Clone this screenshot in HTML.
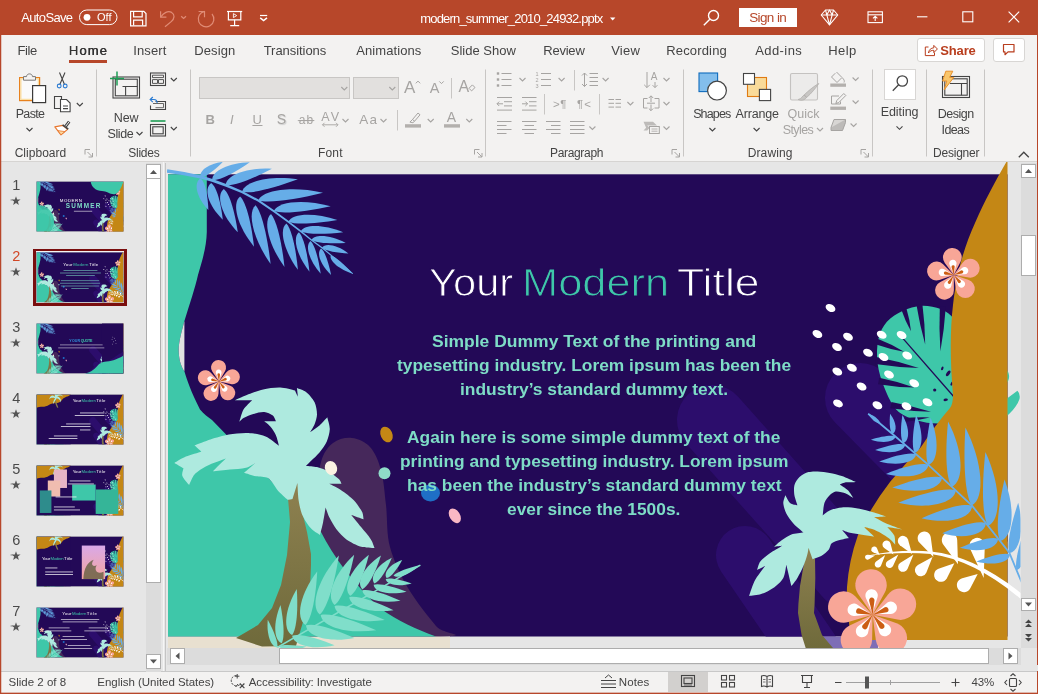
<!DOCTYPE html>
<html lang="en"><head><meta charset="utf-8"><title>modern_summer_2010_24932.pptx - PowerPoint</title>
<style>
html,body{margin:0;padding:0}
body{width:1038px;height:694px;position:relative;overflow:hidden;background:#E6E6E6;font-family:"Liberation Sans",sans-serif}
.t{position:absolute;white-space:nowrap;display:block}
.bm{display:inline-block;width:0;height:0}
svg{position:absolute;left:0;top:0}
</style></head><body>
<div style="position:absolute;left:0px;top:0px;width:1038px;height:35px;background:#B7472A;"></div>
<div style="position:absolute;left:0px;top:35px;width:1038px;height:126px;background:#F3F2F1;"></div>
<div style="position:absolute;left:0px;top:161px;width:1038px;height:1px;background:#D6D4D2;"></div>
<div style="position:absolute;left:163px;top:162px;width:1px;height:509px;background:#F5F5F5;"></div>
<div style="position:absolute;left:165px;top:163px;width:1px;height:508px;background:#C4C4C4;"></div>
<div style="position:absolute;left:0px;top:671px;width:1038px;height:1px;background:#C8C8C8;"></div>
<div style="position:absolute;left:0px;top:672px;width:1038px;height:22px;background:#F3F2F1;"></div>
<div style="position:absolute;left:0px;top:35px;width:1px;height:659px;background:#B7472A;"></div>
<div style="position:absolute;left:1036.5px;top:35px;width:1.5px;height:659px;background:#B7472A;"></div>
<div style="position:absolute;left:0px;top:693px;width:1038px;height:1px;background:#B7472A;"></div>
<div style="position:absolute;left:1px;top:35px;width:1px;height:659px;background:rgba(183,71,42,.25);"></div>
<div style="position:absolute;left:0px;top:692px;width:1038px;height:1px;background:rgba(183,71,42,.35);"></div>
<div style="position:absolute;left:739px;top:8px;width:58px;height:19px;background:#fff;"></div>
<div style="position:absolute;left:69px;top:60px;width:38px;height:3px;background:#B7472A;"></div>
<div style="position:absolute;left:917px;top:38px;width:66px;height:22px;background:#fff;border:1px solid #D8D6D4;border-radius:3px"></div>
<div style="position:absolute;left:993px;top:38px;width:30px;height:22px;background:#fff;border:1px solid #D8D6D4;border-radius:3px"></div>
<div style="position:absolute;left:199px;top:77px;width:151px;height:22px;box-sizing:border-box;background:#E2E0DE;border:1px solid #C8C6C4"></div>
<div style="position:absolute;left:353px;top:77px;width:46px;height:22px;box-sizing:border-box;background:#E2E0DE;border:1px solid #C8C6C4"></div>
<div style="position:absolute;left:884px;top:69px;width:32px;height:31px;box-sizing:border-box;background:#fff;border:1px solid #D8D6D4"></div>
<div style="position:absolute;left:146px;top:163px;width:15px;height:509px;background:#DCDCDC;"></div>
<div style="position:absolute;left:146px;top:164px;width:15px;height:15px;box-sizing:border-box;background:#fff;border:1px solid #ADADAD"></div>
<div style="position:absolute;left:146px;top:178px;width:15px;height:405px;box-sizing:border-box;background:#fff;border:1px solid #ADADAD"></div>
<div style="position:absolute;left:146px;top:654px;width:15px;height:15px;box-sizing:border-box;background:#fff;border:1px solid #ADADAD"></div>
<div style="position:absolute;left:33px;top:248.5px;width:94px;height:57.5px;background:#7A0E0E;"></div>
<div style="position:absolute;left:35.8px;top:251.3px;width:88.4px;height:51.9px;background:#fff;"></div>
<div style="position:absolute;left:1021px;top:163px;width:16px;height:485px;background:#DCDCDC;"></div>
<div style="position:absolute;left:1021px;top:164px;width:15px;height:14px;box-sizing:border-box;background:#fff;border:1px solid #ADADAD"></div>
<div style="position:absolute;left:1021px;top:235px;width:15px;height:41px;box-sizing:border-box;background:#fff;border:1px solid #ADADAD"></div>
<div style="position:absolute;left:1021px;top:598px;width:15px;height:13px;box-sizing:border-box;background:#fff;border:1px solid #ADADAD"></div>
<div style="position:absolute;left:167px;top:648px;width:854px;height:17px;background:#DCDCDC;"></div>
<div style="position:absolute;left:170px;top:648px;width:15px;height:16px;box-sizing:border-box;background:#fff;border:1px solid #ADADAD"></div>
<div style="position:absolute;left:279px;top:648px;width:710px;height:16px;box-sizing:border-box;background:#fff;border:1px solid #ADADAD"></div>
<div style="position:absolute;left:1003px;top:648px;width:15px;height:16px;box-sizing:border-box;background:#fff;border:1px solid #ADADAD"></div>
<div style="position:absolute;left:167px;top:665px;width:871px;height:6px;background:#E6E6E6;"></div>
<div style="position:absolute;left:668px;top:672px;width:40px;height:20px;background:#D2D0CE;"></div>
<svg width="1038" height="694" viewBox="0 0 1038 694">
<defs><clipPath id="ws"><rect x="167" y="162" width="853.5" height="486"/></clipPath>
<linearGradient id="trunk" x1="0" y1="0" x2="0" y2="1"><stop offset="0" stop-color="#8E8150"/><stop offset="1" stop-color="#6F6A3B"/></linearGradient>
</defs>
<g clip-path="url(#ws)"><g id="art">
<rect x="168" y="174.300" width="839.500" height="462.200" fill="#230957"/>
<clipPath id="sc"><rect x="168" y="174.300" width="839.500" height="462.200"/></clipPath><g clip-path="url(#sc)">
<path d="M712 420L850 575" stroke="#2C0D6C" stroke-width="70" stroke-linecap="round" fill="none"/>
<path d="M745 555L810 650" stroke="#2C0D6C" stroke-width="58" stroke-linecap="round" fill="none"/>
<path d="M860 398L980 520" stroke="#2C0D6C" stroke-width="70" stroke-linecap="round" fill="none"/>
</g>
<rect x="815" y="636.500" width="63" height="12" fill="#7E6EB6"/>
<path d="M333.0 443.0C338.2 439.0 345.8 437.3 352.0 438.0C358.2 438.7 365.2 441.7 370.0 447.0C374.8 452.3 378.3 460.3 381.0 470.0C383.7 479.7 384.5 492.2 386.0 505.0C387.5 517.8 386.3 533.2 390.0 547.0C393.7 560.8 400.3 574.8 408.0 588.0C415.7 601.2 429.5 617.9 436.0 626.0C442.5 634.1 469.7 634.8 447.0 636.5C424.3 638.2 322.5 649.2 300.0 636.5C277.5 623.8 309.3 582.8 312.0 560.0C314.7 537.2 314.5 516.3 316.0 500.0C317.5 483.7 318.2 471.5 321.0 462.0C323.8 452.5 327.8 447.0 333.0 443.0Z" fill="#46285B" />
<rect x="168" y="636.500" width="282" height="12" fill="#E8E0D0"/>
<path d="M168 174.300H206.800V232C206.500 246 203 258 198 275C195 288 190 303 184.400 321C181 334 178.600 343 178.700 350.500C178.800 358 180.500 366 184.400 371.300C187 380 191 392 200 409.400C204 414 208 417 212 420L321 532C333 556 352 582 381 609C398 621 416 629 436 636.500H168Z" fill="#3EC7A9"/>
<path d="M184.400 321C181 334 178.600 343 178.700 350.500C178.800 358 180.500 366 184.400 371.300Z" fill="#E1E1E1"/>
<path d="M921.2 305.9C927.6 305.6 935.3 306.9 940.8 309.1C946.4 311.4 950.6 314.4 954.3 319.4C958.0 324.4 960.6 330.4 962.9 339.0C965.1 347.6 967.4 360.6 967.8 370.8C968.2 381.1 967.0 392.5 965.3 400.2C963.7 408.0 962.1 413.5 958.0 417.4C953.9 421.3 947.8 423.0 940.8 423.5C933.9 424.0 923.7 422.6 916.3 420.3C909.0 418.1 902.1 415.4 896.7 410.0C891.4 404.6 887.7 395.7 884.5 388.0C881.3 380.2 878.7 371.7 877.6 363.5C876.6 355.3 876.8 345.9 878.4 339.0C879.9 332.1 882.9 326.5 886.9 321.8C891.0 317.2 897.2 313.5 902.9 310.8C908.6 308.2 914.9 306.2 921.2 305.9Z" fill="#3EC7A9" />
<path d="M1005 369.500C1010.500 371 1010.500 382 1005 384ZM1005 400L1017.400 390.700Q1020.500 393.500 1019.500 399Q1016 409 1005 417.500Z" fill="#3EC7A9"/>
<path d="M899.2 334.1L958.0 401.5" stroke="#230957" stroke-width="1.300"/>
<path d="M901.5 309.9Q905.3 321.1 911.0 331.2Q909.8 319.7 906.4 308.3Z" fill="#230957"/>
<path d="M916.5 305.1Q919.7 325.2 925.2 344.4Q925.0 324.4 922.4 304.3Z" fill="#230957"/>
<path d="M939.8 306.5Q938.9 329.0 940.4 351.2Q944.3 329.3 945.8 306.8Z" fill="#230957"/>
<path d="M876.2 344.4Q890.0 349.2 904.1 351.7Q891.8 344.4 878.2 339.1Z" fill="#230957"/>
<path d="M875.1 364.1Q896.9 367.5 918.8 367.9Q898.0 361.0 876.3 356.9Z" fill="#230957"/>
<path d="M878.0 384.2Q896.2 387.2 914.4 387.5Q897.3 381.4 879.2 377.8Z" fill="#230957"/>
<path d="M890.3 408.3Q910.7 411.3 931.0 411.8Q911.7 405.6 891.4 401.9Z" fill="#230957"/>
<path d="M901.4 422.4Q915.9 420.7 929.8 417.4Q915.5 417.0 900.9 418.3Z" fill="#230957"/>
<ellipse cx="942.3" cy="368.4" rx="1.1" ry="2.0" transform="rotate(20 942.3 368.4)" fill="#230957"/>
<ellipse cx="948.2" cy="373.3" rx="1.6" ry="3.2" transform="rotate(35 948.2 373.3)" fill="#230957"/>
<ellipse cx="951.9" cy="383.6" rx="1.1" ry="2.2" transform="rotate(30 951.9 383.6)" fill="#230957"/>
<ellipse cx="934.7" cy="390.0" rx="1.6" ry="1.6" transform="rotate(0 934.7 390.0)" fill="#230957"/>
<ellipse cx="945.7" cy="399.8" rx="2.2" ry="1.3" transform="rotate(-10 945.7 399.8)" fill="#230957"/>
<path d="M1007.500 160L1007.500 640H852Q846 612 847 587Q849 560 858 535Q870 508 890 482Q905 464 921 447Q936 424 950 408Q953 404 953 395C950 360 950 330 953 305C957 270 965 245 975 223C985 200 996 180 1007.500 160Z" fill="#C48715"/>
<ellipse cx="830.5" cy="308.0" rx="5.2" ry="3.6" transform="rotate(28 830.5 308.0)" fill="#fff"/>
<ellipse cx="817.4" cy="334.0" rx="5.2" ry="3.6" transform="rotate(28 817.4 334.0)" fill="#fff"/>
<ellipse cx="848.0" cy="336.7" rx="5.2" ry="3.6" transform="rotate(28 848.0 336.7)" fill="#fff"/>
<ellipse cx="837.0" cy="347.0" rx="5.2" ry="3.6" transform="rotate(28 837.0 347.0)" fill="#fff"/>
<ellipse cx="868.0" cy="352.8" rx="5.2" ry="3.6" transform="rotate(28 868.0 352.8)" fill="#fff"/>
<ellipse cx="881.7" cy="334.8" rx="5.2" ry="3.6" transform="rotate(28 881.7 334.8)" fill="#fff"/>
<ellipse cx="901.6" cy="335.0" rx="5.2" ry="3.6" transform="rotate(28 901.6 335.0)" fill="#fff"/>
<ellipse cx="883.5" cy="357.0" rx="5.2" ry="3.6" transform="rotate(28 883.5 357.0)" fill="#fff"/>
<ellipse cx="907.2" cy="355.5" rx="5.2" ry="3.6" transform="rotate(28 907.2 355.5)" fill="#fff"/>
<ellipse cx="837.3" cy="371.5" rx="5.2" ry="3.6" transform="rotate(28 837.3 371.5)" fill="#fff"/>
<ellipse cx="851.9" cy="367.8" rx="5.2" ry="3.6" transform="rotate(28 851.9 367.8)" fill="#fff"/>
<ellipse cx="889.0" cy="374.5" rx="5.2" ry="3.6" transform="rotate(28 889.0 374.5)" fill="#fff"/>
<ellipse cx="861.6" cy="386.5" rx="5.2" ry="3.6" transform="rotate(28 861.6 386.5)" fill="#fff"/>
<ellipse cx="914.2" cy="383.2" rx="5.2" ry="3.6" transform="rotate(28 914.2 383.2)" fill="#fff"/>
<ellipse cx="838.0" cy="403.4" rx="5.2" ry="3.6" transform="rotate(28 838.0 403.4)" fill="#fff"/>
<ellipse cx="877.4" cy="405.2" rx="5.2" ry="3.6" transform="rotate(28 877.4 405.2)" fill="#fff"/>
<ellipse cx="906.5" cy="406.2" rx="5.2" ry="3.6" transform="rotate(28 906.5 406.2)" fill="#fff"/>
<ellipse cx="927.5" cy="402.3" rx="5.2" ry="3.6" transform="rotate(28 927.5 402.3)" fill="#fff"/>
<polygon points="166.7,172.7 183.7,175.2 200.2,178.5 211.8,181.7 225.2,186.4 241.5,193.1 257.8,201.6 273.3,212.0 287.8,222.5 300.3,232.0 311.0,240.6 321.6,248.3 336.7,260.4 352.6,274.0 353.2,273.4 337.3,259.6 322.4,247.3 311.8,239.4 301.3,230.8 288.8,221.1 274.5,210.4 259.0,199.8 242.5,190.9 226.2,184.0 212.6,179.1 201.0,175.5 184.3,172.0 167.3,169.3" fill="#66ADE8" />
<path d="M200.6 177.3C198.6 170.6 209.0 163.4 222.8 161.9C215.1 169.8 205.6 177.4 200.6 177.3Z" fill="#66ADE8"/>
<path d="M212.2 180.2C211.5 171.1 229.2 162.7 249.8 162.3C235.9 171.9 219.5 181.0 212.2 180.2Z" fill="#66ADE8"/>
<path d="M225.7 185.0C226.2 174.8 248.0 167.1 271.9 168.7C254.4 178.0 234.0 186.6 225.7 185.0Z" fill="#66ADE8"/>
<path d="M242.1 191.8C244.4 181.1 270.6 175.2 297.9 179.3C276.3 187.4 251.4 194.2 242.1 191.8Z" fill="#66ADE8"/>
<path d="M258.4 200.5C262.4 189.7 292.7 186.0 323.0 192.8C297.6 199.1 268.7 203.8 258.4 200.5Z" fill="#66ADE8"/>
<path d="M273.9 211.1C277.6 201.2 304.3 198.9 330.7 206.2C308.2 211.2 282.7 214.5 273.9 211.1Z" fill="#66ADE8"/>
<path d="M288.3 221.7C292.0 213.0 315.1 212.3 337.4 220.1C317.9 223.4 295.8 225.2 288.3 221.7Z" fill="#66ADE8"/>
<path d="M300.8 231.3C304.4 223.8 324.3 224.2 343.2 232.3C326.2 234.3 307.1 234.8 300.8 231.3Z" fill="#66ADE8"/>
<path d="M311.4 240.0C314.7 233.6 330.9 234.9 345.7 242.9C331.8 243.8 316.3 243.3 311.4 240.0Z" fill="#66ADE8"/>
<path d="M322.0 247.7C325.4 242.6 337.8 245.3 348.4 253.4C337.5 252.9 325.5 251.0 322.0 247.7Z" fill="#66ADE8"/>
<path d="M330.7 255.4C329.1 260.9 339.6 269.5 352.9 273.7C345.0 265.1 335.5 256.3 330.7 255.4Z" fill="#66ADE8"/>
<path d="M200.6 178.3C193.0 182.9 196.6 197.8 208.4 210.1C207.9 196.7 205.5 182.2 200.6 178.3Z" fill="#66ADE8"/>
<path d="M211.2 183.1C203.1 188.9 208.5 206.1 222.8 219.7C221.0 204.2 217.0 187.3 211.2 183.1Z" fill="#66ADE8"/>
<path d="M223.8 188.9C215.3 195.5 221.9 215.9 237.8 232.3C235.2 213.9 230.1 194.0 223.8 188.9Z" fill="#66ADE8"/>
<path d="M240.1 196.6C231.2 203.4 237.7 227.0 254.0 246.7C251.6 225.8 246.7 202.9 240.1 196.6Z" fill="#66ADE8"/>
<path d="M255.6 205.3C246.6 212.6 253.7 240.2 270.6 264.0C267.8 239.7 262.3 212.9 255.6 205.3Z" fill="#66ADE8"/>
<path d="M271.0 213.9C262.5 220.6 268.8 245.5 284.5 266.9C282.1 245.0 277.2 220.8 271.0 213.9Z" fill="#66ADE8"/>
<path d="M286.4 223.6C278.6 229.4 284.1 251.2 297.9 269.8C296.1 250.6 292.0 229.6 286.4 223.6Z" fill="#66ADE8"/>
<path d="M298.9 232.3C292.1 237.5 297.0 256.0 309.5 271.8C307.7 255.3 303.9 237.3 298.9 232.3Z" fill="#66ADE8"/>
<path d="M310.5 240.9C304.6 245.6 309.4 261.0 320.7 273.7C318.7 259.9 315.0 244.9 310.5 240.9Z" fill="#66ADE8"/>
<path d="M321.1 248.6C316.0 253.0 320.7 265.4 331.1 275.0C328.9 263.8 325.2 251.6 321.1 248.6Z" fill="#66ADE8"/>
<path d="M864.500 556Q900 551 931 554Q975 560 1022 600L1022 594Q975 556 931 551.500Q900 549 864.500 556Z" fill="#fff"/>
<path d="M879.7 554.9L873.1 552.3A3.0 3.0 0 1 1 877.0 548.3Z" fill="#fff"/>
<path d="M893.4 554.4L884.2 547.9A4.1 4.1 0 1 1 890.5 543.5Z" fill="#fff"/>
<path d="M912.0 554.1L899.9 545.2A5.2 5.2 0 1 1 908.0 539.6Z" fill="#fff"/>
<path d="M933.4 556.9L919.6 542.8A6.6 6.6 0 1 1 930.8 537.4Z" fill="#fff"/>
<path d="M958.0 564.2L943.4 544.8A7.7 7.7 0 1 1 957.2 539.9Z" fill="#fff"/>
<path d="M983.7 577.9L970.2 548.9A7.7 7.7 0 1 1 984.8 545.9Z" fill="#fff"/>
<path d="M875.1 555.5L869.0 559.2A2.5 2.5 0 1 1 867.9 554.7Z" fill="#fff"/>
<path d="M885.2 554.9L881.1 565.4A3.3 3.3 0 1 1 876.1 561.6Z" fill="#fff"/>
<path d="M898.3 554.4L893.0 565.9A3.8 3.8 0 1 1 887.6 561.0Z" fill="#fff"/>
<path d="M913.4 554.7L907.5 568.9A4.9 4.9 0 1 1 900.4 562.8Z" fill="#fff"/>
<path d="M932.5 556.9L926.4 572.5A6.0 6.0 0 1 1 917.9 565.0Z" fill="#fff"/>
<path d="M954.4 563.2L946.9 578.3A6.8 6.8 0 1 1 938.5 568.7Z" fill="#fff"/>
<path d="M977.7 574.1L970.3 588.3A7.1 7.1 0 1 1 962.2 578.2Z" fill="#fff"/>
<path d="M868.2 413.7L892.8 434.2L928.4 464.9L972.2 505.9L1009.2 552.5L1021.5 582.0" stroke="#66ADE8" stroke-width="1.800" fill="none"/>
<path d="M892.3 433.8C897.5 431.6 896.5 422.1 890.1 413.7C889.3 421.9 889.6 431.0 892.3 433.8Z" fill="#66ADE8"/>
<path d="M903.3 443.2C910.0 440.7 909.7 427.5 902.4 415.1C900.6 426.4 900.1 439.1 903.3 443.2Z" fill="#66ADE8"/>
<path d="M914.7 453.1C923.2 450.3 923.8 432.5 916.1 415.1C913.0 430.2 911.3 447.2 914.7 453.1Z" fill="#66ADE8"/>
<path d="M928.4 464.9C938.3 461.6 939.4 439.4 930.6 417.8C926.7 436.5 924.5 457.6 928.4 464.9Z" fill="#66ADE8"/>
<path d="M951.7 486.7C964.8 480.7 963.1 450.0 948.1 421.4C945.4 447.7 945.3 477.2 951.7 486.7Z" fill="#66ADE8"/>
<path d="M971.7 505.4C985.6 498.0 982.6 461.3 965.4 427.4C963.4 459.0 964.4 494.2 971.7 505.4Z" fill="#66ADE8"/>
<path d="M988.1 525.9C1002.0 519.5 1000.7 484.8 985.4 452.0C982.0 481.7 981.5 515.1 988.1 525.9Z" fill="#66ADE8"/>
<path d="M1000.2 541.1C1013.5 537.1 1015.5 508.1 1004.5 479.4C998.7 503.8 995.1 531.4 1000.2 541.1Z" fill="#66ADE8"/>
<path d="M1009.5 553.1C1020.5 550.9 1024.6 527.2 1018.2 502.7C1011.5 522.3 1006.2 544.8 1009.5 553.1Z" fill="#66ADE8"/>
<path d="M1016.6 570.2C1023.4 568.6 1026.0 552.9 1022.1 536.9C1017.8 549.9 1014.6 564.7 1016.6 570.2Z" fill="#66ADE8"/>
<path d="M895.6 436.6C894.3 442.2 882.7 443.7 870.9 439.7C880.6 436.8 891.6 434.7 895.6 436.6Z" fill="#66ADE8"/>
<path d="M905.2 444.8C903.9 452.0 889.8 454.5 875.1 450.1C886.7 445.9 900.1 442.6 905.2 444.8Z" fill="#66ADE8"/>
<path d="M916.1 454.3C914.8 463.0 897.4 466.4 879.2 461.6C893.4 456.1 909.9 451.8 916.1 454.3Z" fill="#66ADE8"/>
<path d="M928.4 464.9C927.1 475.1 907.1 479.4 886.0 473.9C902.3 467.3 921.2 462.0 928.4 464.9Z" fill="#66ADE8"/>
<path d="M942.1 477.7C940.4 489.8 917.0 494.5 892.3 487.6C911.5 480.1 933.7 474.2 942.1 477.7Z" fill="#66ADE8"/>
<path d="M955.8 490.5C953.8 503.9 926.8 509.6 898.3 502.7C920.5 493.9 946.0 486.9 955.8 490.5Z" fill="#66ADE8"/>
<path d="M972.2 505.9C971.1 518.9 947.3 524.6 921.6 518.3C940.9 509.6 963.4 502.5 972.2 505.9Z" fill="#66ADE8"/>
<path d="M985.9 523.2C984.9 534.9 964.4 539.7 942.1 533.3C958.8 525.8 978.2 519.9 985.9 523.2Z" fill="#66ADE8"/>
<path d="M998.2 538.7C997.4 548.9 979.4 553.2 959.9 547.8C974.5 541.2 991.5 535.9 998.2 538.7Z" fill="#66ADE8"/>
<path d="M1010.0 554.4C1009.0 562.8 993.1 566.1 976.3 561.5C989.3 556.2 1004.2 552.1 1010.0 554.4Z" fill="#66ADE8"/>
<path d="M881.0 424.0Q877.7 416.2 868.0 413.5Q872.6 422.4 881.0 424.0Z" fill="#66ADE8"/>
<polygon points="288.0,498.0 298.0,482.0 301.0,507.0 307.0,532.0 311.0,554.0 311.0,565.0 310.0,590.0 306.0,612.0 300.0,632.0 296.0,646.0 262.0,646.5 236.0,638.0 258.0,625.0 272.0,608.0 281.0,585.0 287.0,555.0 290.0,522.0" fill="url(#trunk)" />
<path d="M234.9 400.2C237.0 399.3 244.6 395.8 248.4 394.3C252.5 392.8 258.9 390.3 263.1 389.4C267.8 388.4 275.4 387.3 280.3 387.5C284.5 387.6 292.8 389.9 295.0 390.4C295.4 391.3 297.5 395.8 297.9 396.8C297.8 395.4 297.1 389.3 296.9 387.9C298.3 388.5 303.8 390.1 306.0 391.9C308.9 394.2 312.9 398.8 314.6 402.2C316.1 405.3 317.0 410.9 317.0 414.4C317.0 417.2 315.6 421.6 314.6 424.2C313.7 426.6 310.8 430.9 310.2 432.0C311.6 431.1 317.0 427.5 319.5 425.4C321.9 423.4 326.1 418.6 327.3 417.3C327.7 419.1 329.8 425.7 329.8 429.1C329.7 432.6 328.3 438.1 326.8 441.4C325.3 444.8 321.8 449.5 319.5 452.4C317.3 455.0 313.3 458.6 310.9 461.0C309.5 462.3 306.7 465.1 306.0 465.9C307.7 466.0 314.0 466.3 317.0 467.1C320.6 468.0 326.0 470.2 329.3 472.0C332.3 473.7 336.6 477.0 339.1 479.3C340.1 480.3 341.2 483.1 341.5 483.8C339.7 483.8 331.1 483.8 329.3 483.8C331.1 484.7 338.3 488.2 341.5 490.4C345.2 492.8 350.8 497.0 353.8 500.2C356.7 503.2 360.4 508.7 362.4 512.4C363.2 514.2 363.4 518.3 363.6 519.3C361.7 518.6 353.2 515.5 351.3 514.9C352.8 516.7 358.4 523.7 361.1 527.1C363.9 530.6 368.5 535.7 370.9 539.4C372.4 541.6 374.1 546.7 374.6 548.0C372.6 547.8 364.8 547.8 361.1 546.7C356.7 545.4 350.2 542.0 346.4 539.4C343.2 537.1 339.0 532.6 336.6 529.6C334.2 526.4 331.1 520.9 329.3 517.3C328.0 514.7 326.2 509.0 325.6 507.5C325.2 509.7 324.0 518.1 323.1 522.2C322.4 525.8 320.4 533.1 320.0 535.0C318.6 534.0 313.0 530.7 310.9 528.3C307.9 525.0 304.1 519.0 302.3 514.9C300.6 511.0 299.3 504.4 298.6 500.2C297.9 495.4 297.6 485.6 297.4 483.0C296.7 485.4 293.3 496.6 292.5 498.9C291.8 499.1 288.4 499.6 287.6 499.7C286.1 498.3 280.4 493.2 277.8 490.4C274.9 487.1 271.7 480.5 268.0 478.1C265.1 476.2 259.2 476.9 255.8 476.2C252.4 475.4 245.8 473.2 244.0 472.7C245.7 471.3 253.6 464.4 255.3 462.9C253.9 463.7 248.8 467.1 246.0 467.8C241.6 469.0 234.5 469.1 230.0 469.5C225.2 470.0 215.5 471.0 212.9 471.3C214.8 469.3 223.9 460.4 225.9 458.5C223.0 459.6 211.9 463.3 206.8 465.9C203.0 467.8 197.3 471.4 194.5 474.4C192.3 476.9 189.9 483.4 189.1 485.0C188.1 483.6 183.3 478.7 182.3 475.7C181.6 473.7 183.3 469.4 183.5 468.3C182.1 467.5 175.8 463.7 174.4 462.9C176.1 462.0 182.5 458.0 185.9 456.6C190.1 454.8 199.0 452.4 201.4 451.7C200.3 450.7 195.5 446.2 194.5 445.3C196.9 444.4 205.9 440.8 210.4 439.4C215.5 437.8 223.6 435.4 228.8 434.5C234.2 433.6 242.9 432.7 248.4 433.0C253.3 433.3 261.0 434.6 265.6 436.5C269.8 438.2 277.0 444.4 279.0 445.8C278.6 444.2 277.1 438.0 275.9 435.2C274.7 432.6 272.3 428.8 270.5 426.7C269.0 424.9 265.3 422.1 264.3 421.3C266.1 421.3 274.1 421.3 275.9 421.3C275.4 420.4 274.3 416.7 272.9 415.6C270.9 414.0 266.9 412.2 264.3 412.0C261.2 411.7 256.3 413.0 253.3 413.9C250.5 414.8 246.1 416.6 243.5 418.1C242.2 418.8 240.0 421.2 239.3 421.8C240.0 419.9 241.7 412.6 243.5 409.5C245.3 406.5 250.8 401.6 252.1 400.2C249.5 400.2 237.5 400.2 234.9 400.2Z" fill="#AEEADF" />
<polygon points="807.5,545.0 815.0,559.0 815.3,578.0 814.6,604.0 814.0,613.0 822.0,635.0 833.0,648.0 805.7,648.0 801.6,635.0 798.0,613.0 798.4,604.0 800.0,586.0 803.5,566.0" fill="url(#trunk)" />
<path d="M808.5 472.1C811.0 471.3 815.1 471.3 817.6 471.5C821.0 471.6 826.4 472.4 829.7 473.1C833.1 473.7 838.5 475.0 841.8 476.1C845.9 477.5 853.8 481.2 855.9 482.1C854.4 482.2 848.6 482.0 845.8 482.3C844.1 482.6 840.7 484.1 839.8 484.4C841.0 485.2 845.9 488.2 847.9 490.2C849.8 492.2 852.7 497.1 853.5 498.3C852.4 497.6 848.2 494.5 845.8 493.6C843.2 492.6 838.6 491.3 835.8 491.6C833.8 491.8 831.1 493.9 829.7 495.3C828.0 496.9 825.5 500.0 824.7 502.3C823.4 505.8 823.0 513.5 822.7 515.4C823.7 514.7 827.5 511.3 829.7 510.4C832.9 509.0 838.3 507.6 841.8 507.4C846.3 507.0 853.5 507.7 857.9 508.4C862.5 509.1 869.6 511.1 874.1 512.4C877.5 513.4 884.4 515.8 886.2 516.4C884.4 516.5 875.9 516.9 874.1 517.0C875.9 518.0 882.7 521.9 886.2 523.5C890.6 525.4 899.9 528.6 902.3 529.5C900.1 529.2 889.5 527.5 887.2 527.1C888.3 528.4 893.0 532.8 894.3 535.6C895.3 537.9 895.1 543.3 895.3 544.7C894.4 543.8 891.1 540.1 889.2 538.6C887.1 536.9 883.5 534.5 881.1 533.2C878.7 531.8 874.7 530.1 872.1 529.1C869.9 528.4 865.2 527.4 864.0 527.1C865.5 528.5 872.6 535.2 874.1 536.6C872.3 536.3 865.4 535.3 862.0 534.8C858.6 534.2 853.2 533.6 849.9 532.8C847.7 532.2 843.4 530.4 842.2 529.9C843.2 531.2 847.9 536.8 848.9 538.0C847.5 538.3 842.3 539.3 839.8 540.0C837.5 540.7 833.6 541.7 831.7 543.3C830.2 544.6 830.0 548.2 828.7 549.7C827.1 551.7 823.9 554.4 821.6 555.8C819.3 557.1 813.9 558.7 812.6 559.2C812.0 557.5 809.1 549.4 808.5 547.7C808.4 548.6 808.0 552.1 807.5 553.7C806.6 557.2 804.9 562.6 803.5 565.8C802.0 569.3 799.4 574.7 797.4 577.9C796.0 580.4 792.3 584.8 791.4 586.0C790.6 582.8 787.1 568.0 786.3 564.8C785.9 566.8 785.2 574.7 783.3 577.9C781.4 581.4 776.5 585.7 773.2 588.0C770.2 590.3 764.7 592.9 761.1 594.1C757.9 595.2 750.8 595.8 749.0 596.1C749.9 593.7 752.8 584.2 755.1 580.0C757.4 575.7 763.7 568.0 765.2 565.8C764.0 566.5 758.3 569.3 757.1 569.9C757.6 568.7 758.7 563.7 760.1 561.8C762.2 559.1 766.5 555.7 769.2 553.7C772.7 551.2 780.3 546.9 782.3 545.7C781.1 545.8 775.5 546.5 774.2 546.7C775.3 545.8 779.2 542.1 781.3 540.6C784.0 538.7 788.3 535.7 791.4 534.6C794.6 533.4 801.7 532.9 803.5 532.6C802.0 531.2 795.9 526.3 793.4 523.5C791.1 520.9 787.9 516.5 786.3 513.4C785.0 510.8 783.5 506.3 783.3 503.3C783.2 501.0 785.0 496.5 785.3 495.3C786.1 496.5 788.3 501.6 790.4 503.3C792.0 504.6 796.4 505.0 797.4 505.3C797.0 503.8 794.9 498.2 794.4 495.3C794.0 492.5 793.7 487.9 794.4 485.2C795.1 482.6 797.5 478.9 799.5 477.1C801.6 475.1 805.8 472.9 808.5 472.1Z" fill="#AEEADF" />
<path d="M277.3 647.5L420.4 565.1" stroke="#80DECA" stroke-width="1.500" fill="none"/>
<path d="M277.3 647.5C270.8 647.3 266.3 634.2 267.8 619.8C273.4 630.2 278.5 642.5 277.3 647.5Z" fill="#80DECA"/>
<path d="M281.7 643.2C273.6 640.4 273.0 622.4 280.5 605.0C283.5 620.2 285.0 637.3 281.7 643.2Z" fill="#80DECA"/>
<path d="M292.1 635.0C282.6 630.3 284.8 608.7 296.8 588.9C298.0 607.7 297.1 628.5 292.1 635.0Z" fill="#80DECA"/>
<path d="M305.4 625.0C294.9 618.2 300.4 593.1 317.2 571.6C316.1 593.7 312.3 618.1 305.4 625.0Z" fill="#80DECA"/>
<path d="M319.8 614.6C309.4 606.0 318.4 578.3 338.9 555.6C335.0 580.4 328.0 607.4 319.8 614.6Z" fill="#80DECA"/>
<path d="M334.6 605.0C325.2 596.7 334.4 573.1 354.2 554.7C349.8 576.2 342.4 599.4 334.6 605.0Z" fill="#80DECA"/>
<path d="M350.2 595.8C342.0 588.1 350.8 568.8 368.9 554.7C364.5 572.6 357.3 591.6 350.2 595.8Z" fill="#80DECA"/>
<path d="M362.3 589.4C355.5 582.1 364.3 566.2 381.0 555.6C376.2 570.6 368.8 586.4 362.3 589.4Z" fill="#80DECA"/>
<path d="M374.4 583.4C369.2 576.8 377.4 564.8 391.8 557.7C386.9 569.4 380.0 581.5 374.4 583.4Z" fill="#80DECA"/>
<path d="M386.6 578.1C382.9 572.5 390.3 563.9 402.2 559.9C397.5 568.6 391.1 577.3 386.6 578.1Z" fill="#80DECA"/>
<path d="M393.5 575.5C397.5 579.3 410.1 574.4 420.4 565.1C409.1 567.8 396.8 571.9 393.5 575.5Z" fill="#80DECA"/>
<path d="M279.1 646.1C281.2 651.1 294.2 651.3 306.8 646.6C295.7 644.9 283.3 644.0 279.1 646.1Z" fill="#80DECA"/>
<path d="M292.1 635.7C293.4 645.7 313.4 650.2 334.6 645.3C318.2 638.5 299.4 633.0 292.1 635.7Z" fill="#80DECA"/>
<path d="M306.0 625.3C307.1 637.0 329.9 642.9 354.5 638.0C336.0 629.5 314.5 622.5 306.0 625.3Z" fill="#80DECA"/>
<path d="M320.7 614.9C322.1 627.1 348.2 634.3 376.2 630.2C354.9 620.6 330.3 612.3 320.7 614.9Z" fill="#80DECA"/>
<path d="M334.6 605.9C335.7 617.3 359.3 624.0 384.8 620.1C365.6 611.2 343.4 603.5 334.6 605.9Z" fill="#80DECA"/>
<path d="M349.3 597.2C350.2 607.4 370.9 613.5 393.5 610.2C376.7 602.1 357.1 595.1 349.3 597.2Z" fill="#80DECA"/>
<path d="M362.3 590.3C363.2 599.2 381.1 604.1 400.5 600.7C385.9 594.0 369.0 588.3 362.3 590.3Z" fill="#80DECA"/>
<path d="M373.6 584.7C374.7 592.4 390.2 595.6 406.5 591.7C393.8 586.7 379.2 582.7 373.6 584.7Z" fill="#80DECA"/>
<path d="M385.7 579.0C386.9 585.0 399.1 587.0 411.7 583.4C401.6 579.8 390.0 577.2 385.7 579.0Z" fill="#80DECA"/>
<path d="M219.0 381.6L212.3 371.6A7.5 7.5 0 1 1 225.0 371.2Z" fill="#F8A697"/>
<path d="M219.0 381.6L226.4 372.2A7.5 7.5 0 1 1 230.8 384.1Z" fill="#F8A697"/>
<path d="M219.0 381.6L230.3 385.8A7.5 7.5 0 1 1 220.3 393.6Z" fill="#F8A697"/>
<path d="M219.0 381.6L218.5 393.6A7.5 7.5 0 1 1 208.0 386.5Z" fill="#F8A697"/>
<path d="M219.0 381.6L207.4 384.9A7.5 7.5 0 1 1 210.9 372.7Z" fill="#F8A697"/>
<path d="M219.0 380.7L216.0 373.5A2.9 2.9 0 1 1 221.4 373.4Z" fill="#fff"/>
<path d="M219.8 381.3L225.7 376.2A2.9 2.9 0 1 1 227.6 381.4Z" fill="#fff"/>
<path d="M219.5 382.3L226.2 386.3A2.9 2.9 0 1 1 221.9 389.7Z" fill="#fff"/>
<path d="M218.5 382.3L216.7 389.9A2.9 2.9 0 1 1 212.2 386.8Z" fill="#fff"/>
<path d="M218.2 381.4L210.4 382.0A2.9 2.9 0 1 1 211.9 376.7Z" fill="#fff"/>
<path d="M219.0 381.6L217.5 375.0A1.3 1.3 0 1 1 220.0 374.9Z" fill="#CC5E14"/>
<path d="M219.0 381.6L224.8 378.1A1.3 1.3 0 1 1 225.7 380.5Z" fill="#CC5E14"/>
<path d="M219.0 381.6L224.1 386.1A1.3 1.3 0 1 1 222.1 387.6Z" fill="#CC5E14"/>
<path d="M219.0 381.6L216.3 387.8A1.3 1.3 0 1 1 214.2 386.4Z" fill="#CC5E14"/>
<path d="M219.0 381.6L212.2 381.0A1.3 1.3 0 1 1 212.9 378.5Z" fill="#CC5E14"/>
<path d="M953.8 275.1L944.8 262.9A9.4 9.4 0 1 1 960.7 261.6Z" fill="#F8A697"/>
<path d="M953.8 275.1L962.6 262.8A9.4 9.4 0 1 1 968.7 277.5Z" fill="#F8A697"/>
<path d="M953.8 275.1L968.2 279.7A9.4 9.4 0 1 1 956.1 290.1Z" fill="#F8A697"/>
<path d="M953.8 275.1L953.9 290.2A9.4 9.4 0 1 1 940.3 281.9Z" fill="#F8A697"/>
<path d="M953.8 275.1L939.4 279.9A9.4 9.4 0 1 1 943.1 264.3Z" fill="#F8A697"/>
<path d="M953.7 274.0L949.6 265.1A3.7 3.7 0 1 1 956.4 264.6Z" fill="#fff"/>
<path d="M954.8 274.7L962.0 268.0A3.7 3.7 0 1 1 964.6 274.3Z" fill="#fff"/>
<path d="M954.5 275.9L963.1 280.7A3.7 3.7 0 1 1 957.9 285.1Z" fill="#fff"/>
<path d="M953.2 276.0L951.4 285.7A3.7 3.7 0 1 1 945.5 282.1Z" fill="#fff"/>
<path d="M952.7 274.8L943.0 276.0A3.7 3.7 0 1 1 944.6 269.4Z" fill="#fff"/>
<path d="M953.8 275.1L951.5 266.9A1.6 1.6 0 1 1 954.7 266.6Z" fill="#CC5E14"/>
<path d="M953.8 275.1L960.9 270.4A1.6 1.6 0 1 1 962.2 273.4Z" fill="#CC5E14"/>
<path d="M953.8 275.1L960.5 280.4A1.6 1.6 0 1 1 958.0 282.5Z" fill="#CC5E14"/>
<path d="M953.8 275.1L950.8 283.1A1.6 1.6 0 1 1 948.0 281.4Z" fill="#CC5E14"/>
<path d="M953.8 275.1L945.3 274.7A1.6 1.6 0 1 1 946.0 271.6Z" fill="#CC5E14"/>
<path d="M872.6 614.8L858.1 593.9A15.7 15.7 0 1 1 884.8 592.5Z" fill="#F8A697"/>
<path d="M872.6 614.8L888.0 594.6A15.7 15.7 0 1 1 897.5 619.6Z" fill="#F8A697"/>
<path d="M872.6 614.8L896.6 623.2A15.7 15.7 0 1 1 875.8 640.0Z" fill="#F8A697"/>
<path d="M872.6 614.8L872.1 640.2A15.7 15.7 0 1 1 849.6 625.6Z" fill="#F8A697"/>
<path d="M872.6 614.8L848.3 622.1A15.7 15.7 0 1 1 855.2 596.3Z" fill="#F8A697"/>
<path d="M872.5 613.0L865.9 597.9A6.2 6.2 0 1 1 877.5 597.3Z" fill="#fff"/>
<path d="M874.3 614.1L886.6 603.2A6.2 6.2 0 1 1 890.7 614.0Z" fill="#fff"/>
<path d="M873.7 616.2L887.9 624.6A6.2 6.2 0 1 1 879.0 631.8Z" fill="#fff"/>
<path d="M871.6 616.3L868.1 632.4A6.2 6.2 0 1 1 858.4 626.1Z" fill="#fff"/>
<path d="M870.8 614.3L854.5 615.9A6.2 6.2 0 1 1 857.5 604.8Z" fill="#fff"/>
<path d="M872.6 614.8L869.2 600.9A2.7 2.7 0 1 1 874.5 600.6Z" fill="#CC5E14"/>
<path d="M872.6 614.8L884.8 607.2A2.7 2.7 0 1 1 886.7 612.3Z" fill="#CC5E14"/>
<path d="M872.6 614.8L883.5 624.1A2.7 2.7 0 1 1 879.4 627.4Z" fill="#CC5E14"/>
<path d="M872.6 614.8L867.2 628.1A2.7 2.7 0 1 1 862.7 625.1Z" fill="#CC5E14"/>
<path d="M872.6 614.8L858.3 613.8A2.7 2.7 0 1 1 859.7 608.6Z" fill="#CC5E14"/>
<ellipse cx="386.5" cy="434.5" rx="5.8" ry="8.2" transform="rotate(-25 386.5 434.5)" fill="#C48715"/>
<ellipse cx="384.5" cy="473.3" rx="6.0" ry="6.0" transform="rotate(0 384.5 473.3)" fill="#8FDCC8"/>
<ellipse cx="430.5" cy="493.0" rx="9.5" ry="8.5" transform="rotate(0 430.5 493.0)" fill="#1F6FC6"/>
<ellipse cx="454.8" cy="515.8" rx="5.2" ry="8.0" transform="rotate(-32 454.8 515.8)" fill="#F9B8C4"/>
<ellipse cx="331.0" cy="468.0" rx="6.0" ry="7.2" transform="rotate(-25 331.0 468.0)" fill="#FBF2E2"/>
</g></g>
<clipPath id="tc0"><rect x="36.5" y="181.5" width="87" height="50"/></clipPath><rect x="36.0" y="181.0" width="88" height="51" fill="#C9C9C9"/><g clip-path="url(#tc0)"><g transform="translate(19.090 162.645) scale(0.10363 0.10818)"><use href="#art"/><path d="M690 175C700 230 740 260 800 262C850 262 880 300 930 290C960 280 990 230 1007 175Z" fill="#3EC7A9"/><path d="M168 636V400C230 380 300 420 330 500C350 560 330 600 300 636Z" fill="#3EC7A9" opacity=".9"/><path d="M1007 175L1007 636H900C880 560 960 470 950 400C945 330 990 250 1007 175Z" fill="#C48715"/></g></g>
<clipPath id="tc1"><rect x="36.5" y="252.3" width="87" height="50"/></clipPath><rect x="36.0" y="251.8" width="88" height="51" fill="#C9C9C9"/><g clip-path="url(#tc1)"><g transform="translate(19.090 233.445) scale(0.10363 0.10818)"><use href="#art"/></g></g>
<clipPath id="tc2"><rect x="36.5" y="323.5" width="87" height="50"/></clipPath><rect x="36.0" y="323.0" width="88" height="51" fill="#C9C9C9"/><g clip-path="url(#tc2)"><g transform="translate(19.090 304.645) scale(0.10363 0.10818)"><use href="#art"/><rect x="800" y="170" width="208" height="470" fill="#230957"/><path d="M700 600C760 520 860 540 930 480C970 450 1000 440 1007 430V640H640Z" fill="#2C0D6C"/><path d="M1007 640H630C700 625 735 590 770 552C810 512 880 532 930 506C970 490 1000 480 1007 468Z" fill="#3EC7A9"/><circle cx="905" cy="300" r="3.500" fill="#fff"/><circle cx="923" cy="310" r="3.500" fill="#fff"/><circle cx="897" cy="322" r="3.500" fill="#fff"/><circle cx="931" cy="330" r="3.500" fill="#fff"/><circle cx="911" cy="344" r="3.500" fill="#fff"/><circle cx="935" cy="356" r="3.500" fill="#fff"/><circle cx="901" cy="364" r="3.500" fill="#fff"/></g></g>
<clipPath id="tc3"><rect x="36.5" y="394.5" width="87" height="50"/></clipPath><rect x="36.0" y="394.0" width="88" height="51" fill="#C9C9C9"/><g clip-path="url(#tc3)"><g transform="translate(19.090 375.645) scale(0.10363 0.10818)"><use href="#art"/><rect x="168" y="175" width="330" height="462" fill="#230957"/><path d="M168 175H500C470 200 440 190 410 230C380 270 330 240 290 270C250 300 200 280 168 300Z" fill="#C48715"/><g transform="translate(80 -75) scale(0.82)"><path d="M330 330C335 380 350 420 365 450L350 452C330 420 318 380 318 330Z" fill="#857A48"/><path d="M325 330C290 300 270 320 255 360C280 335 300 340 325 345C310 370 300 390 305 410C320 380 335 365 345 345C370 350 390 370 395 395C400 360 385 335 350 325C380 310 405 315 420 330C405 295 370 290 345 305C340 280 320 262 295 265C315 280 322 300 325 330Z" fill="#AEEADF"/></g></g></g>
<clipPath id="tc4"><rect x="36.5" y="465.5" width="87" height="50"/></clipPath><rect x="36.0" y="465.0" width="88" height="51" fill="#C9C9C9"/><g clip-path="url(#tc4)"><g transform="translate(19.090 446.645) scale(0.10363 0.10818)"><use href="#art"/><rect x="168" y="175" width="330" height="462" fill="#230957"/><path d="M168 175H500C470 200 440 190 410 230C380 270 330 240 290 270C250 300 200 280 168 300Z" fill="#C48715"/><g transform="translate(80 -75) scale(0.82)"><path d="M330 330C335 380 350 420 365 450L350 452C330 420 318 380 318 330Z" fill="#857A48"/><path d="M325 330C290 300 270 320 255 360C280 335 300 340 325 345C310 370 300 390 305 410C320 380 335 365 345 345C370 350 390 370 395 395C400 360 385 335 350 325C380 310 405 315 420 330C405 295 370 290 345 305C340 280 320 262 295 265C315 280 322 300 325 330Z" fill="#AEEADF"/></g><rect x="336" y="211" width="126" height="171" fill="#E6B4C6"/><rect x="277" y="313" width="120" height="148" fill="#F0BDB0"/><rect x="200" y="405" width="112" height="208" fill="#2E8C8C"/><rect x="512" y="350" width="227" height="148" fill="#3EC7A9"/><rect x="739" y="396" width="218" height="226" fill="#35B598"/></g></g>
<clipPath id="tc5"><rect x="36.5" y="536.5" width="87" height="50"/></clipPath><rect x="36.0" y="536.0" width="88" height="51" fill="#C9C9C9"/><g clip-path="url(#tc5)"><g transform="translate(19.090 517.645) scale(0.10363 0.10818)"><use href="#art"/><rect x="168" y="175" width="330" height="462" fill="#230957"/><path d="M168 175H500C470 200 440 190 410 230C380 270 330 240 290 270C250 300 200 280 168 300Z" fill="#C48715"/><g transform="translate(80 -75) scale(0.82)"><path d="M330 330C335 380 350 420 365 450L350 452C330 420 318 380 318 330Z" fill="#857A48"/><path d="M325 330C290 300 270 320 255 360C280 335 300 340 325 345C310 370 300 390 305 410C320 380 335 365 345 345C370 350 390 370 395 395C400 360 385 335 350 325C380 310 405 315 420 330C405 295 370 290 345 305C340 280 320 262 295 265C315 280 322 300 325 330Z" fill="#AEEADF"/></g><defs><linearGradient id="ph" x1="0" y1="0" x2="0" y2="1"><stop offset="0" stop-color="#D9A8E8"/><stop offset="1" stop-color="#F4A6A0"/></linearGradient></defs><rect x="605" y="258" width="225" height="310" fill="url(#ph)"/><path d="M620 568C625 470 660 410 720 390C690 430 705 460 750 440C720 480 750 530 815 500V568Z" fill="#5B5A3A" opacity=".75"/></g></g>
<clipPath id="tc6"><rect x="36.5" y="607.5" width="87" height="50"/></clipPath><rect x="36.0" y="607.0" width="88" height="51" fill="#C9C9C9"/><g clip-path="url(#tc6)"><g transform="translate(19.090 588.645) scale(0.10363 0.10818)"><use href="#art"/></g></g>
<rect x="73.9" y="210.8" width="18.3" height="0.8" fill="#fff" opacity="0.7"/>
<rect x="60.0" y="344.5" width="42.6" height="0.8" fill="#fff" opacity="0.6"/>
<rect x="58.2" y="347.5" width="46.1" height="0.8" fill="#fff" opacity="0.6"/>
<rect x="63.5" y="270.1" width="33.9" height="0.8" fill="#7EDCC6" opacity="0.7"/>
<rect x="60.0" y="272.6" width="40.9" height="0.8" fill="#7EDCC6" opacity="0.7"/>
<rect x="66.1" y="275.1" width="28.7" height="0.8" fill="#7EDCC6" opacity="0.7"/>
<rect x="60.9" y="280.3" width="38.3" height="0.8" fill="#7EDCC6" opacity="0.7"/>
<rect x="60.0" y="282.8" width="40.0" height="0.8" fill="#7EDCC6" opacity="0.7"/>
<rect x="60.9" y="285.6" width="38.3" height="0.8" fill="#7EDCC6" opacity="0.7"/>
<rect x="71.3" y="288.1" width="17.4" height="0.8" fill="#7EDCC6" opacity="0.7"/>
<rect x="80.0" y="412.5" width="24.4" height="0.9" fill="#fff" opacity="0.8"/>
<rect x="74.8" y="415.0" width="29.6" height="0.9" fill="#fff" opacity="0.8"/>
<rect x="66.1" y="423.5" width="24.4" height="0.9" fill="#fff" opacity="0.8"/>
<rect x="60.9" y="426.0" width="29.6" height="0.9" fill="#fff" opacity="0.8"/>
<rect x="80.0" y="429.5" width="10.4" height="0.9" fill="#fff" opacity="0.8"/>
<rect x="53.9" y="435.5" width="23.5" height="0.9" fill="#fff" opacity="0.8"/>
<rect x="48.7" y="438.0" width="28.7" height="0.9" fill="#fff" opacity="0.8"/>
<rect x="69.6" y="480.5" width="20.9" height="0.9" fill="#fff" opacity="0.8"/>
<rect x="67.8" y="483.5" width="26.1" height="0.9" fill="#fff" opacity="0.8"/>
<rect x="55.6" y="496.5" width="20.9" height="0.9" fill="#fff" opacity="0.8"/>
<rect x="53.9" y="506.5" width="20.9" height="0.9" fill="#fff" opacity="0.8"/>
<rect x="53.9" y="509.5" width="26.1" height="0.9" fill="#fff" opacity="0.8"/>
<rect x="45.2" y="567.5" width="12.2" height="0.9" fill="#fff" opacity="0.8"/>
<rect x="45.2" y="571.5" width="27.8" height="0.9" fill="#fff" opacity="0.8"/>
<rect x="45.2" y="574.0" width="27.8" height="0.9" fill="#fff" opacity="0.8"/>
<rect x="60.9" y="619.0" width="38.3" height="0.8" fill="#fff" opacity="0.75"/>
<rect x="62.6" y="621.5" width="34.8" height="0.8" fill="#fff" opacity="0.75"/>
<rect x="48.7" y="627.5" width="20.9" height="0.8" fill="#fff" opacity="0.75"/>
<rect x="88.7" y="627.5" width="19.1" height="0.8" fill="#fff" opacity="0.75"/>
<rect x="45.2" y="630.5" width="26.1" height="0.8" fill="#fff" opacity="0.75"/>
<rect x="84.3" y="630.5" width="26.1" height="0.8" fill="#fff" opacity="0.75"/>
<rect x="62.6" y="636.0" width="21.8" height="0.8" fill="#fff" opacity="0.75"/>
<rect x="60.9" y="639.0" width="26.1" height="0.8" fill="#fff" opacity="0.75"/>
<rect x="67.8" y="645.0" width="22.6" height="0.8" fill="#fff" opacity="0.75"/>
<rect x="64.3" y="648.0" width="27.8" height="0.8" fill="#fff" opacity="0.75"/>
<rect x="79.5" y="10" width="37.5" height="14.6" rx="7.3" fill="none" stroke="#fff" stroke-width="1"/><circle cx="87" cy="17.3" r="3.4" fill="#fff"/>
<g fill="none" stroke="#fff" stroke-width="1.2"><path d="M130.6 11.4h13.2l2.2 2.2v12.2h-15.4z"/><path d="M133.6 11.6v5.2h8.6v-5.2"/><path d="M133.6 25.6v-5.4h9v5.4"/></g>
<g fill="none" stroke="#E08C76" stroke-width="1.200"><path d="M160.600 11.300V17.100H166.400"/><path d="M160.800 17C163.500 12.600 168 10.600 171.600 12.400C175 14.400 174.800 18.600 171.200 21.600L165 26.800"/><path d="M181.200 16.200l2.400 2.300 2.400-2.300"/></g>
<g fill="none" stroke="#E08C76" stroke-width="1.200"><path d="M212 14A7.800 7.800 0 1 1 204.500 11.400"/><path d="M198.600 11.500H204.500V17.200"/></g>
<g fill="none" stroke="#fff" stroke-width="1.200"><path d="M227 11.500h15.200"/><path d="M228.400 11.500v8.300h12.400v-8.300"/><path d="M234.600 19.800v5.700M230.200 25.600h9"/><path d="M233.400 13.600l3.300 2-3.300 2z" stroke-width=".9"/></g>
<path d="M260 15.500h7.200" stroke="#fff" stroke-width="1.200"/><path d="M260.200 17.900l3.400 2.700 3.400-2.700" fill="none" stroke="#fff" stroke-width="1.500"/>
<path d="M610 17.4h5.4l-2.7 3z" fill="#fff"/>
<g fill="none" stroke="#fff" stroke-width="1.4"><circle cx="713.5" cy="15.5" r="5"/><path d="M709.8 19.2l-6 6"/></g>
<g fill="none" stroke="#fff" stroke-width="1.1" stroke-linejoin="round"><path d="M825.5 10h8l4.3 5-8.3 9.8-8.3-9.8z"/><path d="M821.2 15h16.6M825.5 10l4 14.8 4-14.8M826.8 15l2.7-5 2.7 5"/></g>
<g fill="none" stroke="#fff" stroke-width="1.1"><rect x="868" y="11.8" width="14.4" height="10.8"/><path d="M868 14.8h14.4"/><path d="M875.2 21v-4.6M873 18.4l2.2-2.2 2.2 2.2"/></g>
<g fill="none" stroke="#fff" stroke-width="1.1"><path d="M917 16.8h10.4"/><rect x="962.8" y="11.8" width="10" height="10"/><path d="M1008.6 11.7l10.6 10.6M1019.2 11.7l-10.6 10.6"/></g>
<g fill="none" stroke="#B93E1E" stroke-width="1" stroke-linejoin="round"><path d="M928.5 47h-3.2v8.6h9.2v-3"/><path d="M928.4 53c.6-3.4 2.6-5 5.4-5.2v-2.4l3.6 3.6-3.6 3.6v-2.3c-2.2 0-3.8.6-5.4 2.7z"/></g>
<path d="M1003.5 44.5h10.5v7.4h-6l-3 2.8v-2.8h-1.5z" fill="none" stroke="#B93E1E" stroke-width="1.2" stroke-linejoin="round"/>
<path d="M96.5 69.5V156.5" stroke="#C8C6C4" stroke-width="1"/>
<path d="M190.5 69.5V156.5" stroke="#C8C6C4" stroke-width="1"/>
<path d="M485.5 69.5V156.5" stroke="#C8C6C4" stroke-width="1"/>
<path d="M683.5 69.5V156.5" stroke="#C8C6C4" stroke-width="1"/>
<path d="M872.5 69.5V156.5" stroke="#C8C6C4" stroke-width="1"/>
<path d="M926.5 69.5V156.5" stroke="#C8C6C4" stroke-width="1"/>
<path d="M984.5 69.5V156.5" stroke="#C8C6C4" stroke-width="1"/>
<g fill="none" stroke="#A6A4A2" stroke-width="1"><path d="M85 154.5v-5h5"/><path d="M87.5 152.0l5 5M92.5 153.0v4h-4"/></g>
<g fill="none" stroke="#A6A4A2" stroke-width="1"><path d="M474.5 154.5v-5h5"/><path d="M477.0 152.0l5 5M482.0 153.0v4h-4"/></g>
<g fill="none" stroke="#A6A4A2" stroke-width="1"><path d="M672 154.5v-5h5"/><path d="M674.5 152.0l5 5M679.5 153.0v4h-4"/></g>
<g fill="none" stroke="#A6A4A2" stroke-width="1"><path d="M861 154.5v-5h5"/><path d="M863.5 152.0l5 5M868.5 153.0v4h-4"/></g>
<path d="M1018.8 157.2l5-5 5 5" fill="none" stroke="#444444" stroke-width="1.3"/>
<g><rect x="19.600" y="77.600" width="20" height="23" fill="#FAFAFA" stroke="#E8821E" stroke-width="1.200"/><rect x="20.900" y="78.900" width="17.400" height="20.400" fill="none" stroke="#FBD88C" stroke-width="1"/><path d="M23.500 80.200v-3.600h3c.2-3.600 5.800-3.600 6 0h3v3.600z" fill="#F3F2F1" stroke="#7A7876" stroke-width="1"/><rect x="32.600" y="85.600" width="13" height="17" fill="#fff" stroke="#3B3A39" stroke-width="1.200"/></g>
<path d="M26.5 128.0l3 3l3-3" fill="none" stroke="#444444" stroke-width="1.1"/>
<g fill="none" stroke-width="1.1"><path d="M59.5 72.5l5 12M65 72.5l-5.2 12" stroke="#444"/><circle cx="59.2" cy="86" r="1.9" stroke="#2B7CD3"/><circle cx="65.2" cy="86" r="1.9" stroke="#2B7CD3"/></g>
<g fill="#F3F2F1" stroke="#444" stroke-width="1.1"><path d="M54.5 96.5h7v12h-7z"/><path d="M60.5 99.5h6l3.6 3.6v8.6h-9.6z" fill="#fff"/><path d="M63 106h5M63 108.6h5" /></g>
<path d="M76.8 103.0l3 3l3-3" fill="none" stroke="#444444" stroke-width="1.1"/>
<g stroke-linejoin="round"><path d="M54.800 126.900L62.600 125.400L67.600 129.400L61 134.800Z" fill="#fff" stroke="#E8762D" stroke-width="1.100"/><path d="M57.800 130.600L64.800 131.600L61 134.800Z" fill="#FBD9A0" stroke="#E8762D" stroke-width=".8"/><path d="M62.600 124.800L68.200 129.200" stroke="#444" stroke-width="1.700"/><path d="M65.600 126.400L69.200 121.600" stroke="#444" stroke-width="3"/><path d="M65.700 126.200L69.100 121.800" stroke="#F3F2F1" stroke-width="1"/></g>
<g fill="none" stroke="#444" stroke-width="1.1"><rect x="113" y="77" width="26.5" height="21" /><rect x="115.3" y="79.2" width="22" height="16.6"/><path d="M122.5 86.5h15M125.6 86.5v9.3"/></g><path d="M117 71.5v14M110 78.5h14" stroke="#1E9E55" stroke-width="1.5"/>
<path d="M136.5 132.0l3 3l3-3" fill="none" stroke="#444444" stroke-width="1.1"/>
<g fill="none" stroke="#444" stroke-width="1.1"><rect x="150.5" y="73" width="15" height="12.5"/><path d="M152.5 75.2h11v2.4h-11zM152.5 79.6h5v3.8h-5zM158.5 79.6h5v3.8h-5z" stroke-width=".9"/></g>
<path d="M170.8 78.0l3 3l3-3" fill="none" stroke="#444444" stroke-width="1.1"/>
<g fill="none" stroke-width="1.1"><path d="M155.5 101.5h10v8h-15v-4" stroke="#444"/><path d="M153 103.5h10.5v4.2h-8" stroke="#444" stroke-width=".8"/><path d="M150.5 99.5h3.4c2 0 3.2 1.5 3.2 3.6M152.8 97l-2.6 2.6 2.6 2.6" stroke="#2B7CD3" stroke-width="1.2"/></g>
<path d="M150.5 121h15" stroke="#1E9E55" stroke-width="1.6"/><g fill="none" stroke="#444" stroke-width="1.1"><rect x="150.5" y="124.5" width="15" height="11.5"/><rect x="152.8" y="126.8" width="10.4" height="7"/></g>
<path d="M170.8 127.0l3 3l3-3" fill="none" stroke="#444444" stroke-width="1.1"/>
<path d="M341.3 87.0l3 3l3-3" fill="none" stroke="#A6A4A2" stroke-width="1.1"/>
<path d="M389.3 87.0l3 3l3-3" fill="none" stroke="#A6A4A2" stroke-width="1.1"/>
<path d="M297.8 120.6h16" stroke="#A6A4A2" stroke-width=".9"/>
<path d="M322.5 124.8h15.4M324.5 122.8l-2 2 2 2M336 122.8l2 2-2 2" fill="none" stroke="#A6A4A2" stroke-width=".9"/>
<path d="M342.5 119.0l3 3l3-3" fill="none" stroke="#A6A4A2" stroke-width="1.1"/>
<path d="M380.5 119.0l3 3l3-3" fill="none" stroke="#A6A4A2" stroke-width="1.1"/>
<path d="M415.8 83.3l2.2-2.2 2.2 2.2" fill="none" stroke="#A6A4A2" stroke-width="1"/>
<path d="M439.3 81.4l2.2 2.2 2.2-2.2" fill="none" stroke="#A6A4A2" stroke-width="1"/>
<path d="M451.5 78V98.5" stroke="#C8C6C4" stroke-width="1"/>
<path d="M469 88.3l3.4-3.4 2.6 2.6-3.4 3.4z" fill="#F3F2F1" stroke="#A6A4A2" stroke-width="1"/>
<path d="M397.5 110V130.5" stroke="#C8C6C4" stroke-width="1"/>
<path d="M412.5 119.5l5.5-6.5 2 1.8-5.4 6.4zM412.5 119.5l-2.6 2.6 3 .6 1.8-1.6" fill="none" stroke="#A6A4A2" stroke-width="1" stroke-linejoin="round"/><rect x="405" y="124.2" width="16" height="3.4" fill="#B3B0AD"/>
<path d="M427.7 119.0l3 3l3-3" fill="none" stroke="#A6A4A2" stroke-width="1.1"/>
<rect x="444" y="124.2" width="16" height="3.4" fill="#B3B0AD"/>
<path d="M466.3 119.0l3 3l3-3" fill="none" stroke="#A6A4A2" stroke-width="1.1"/>
<rect x="496.8" y="72.3" width="2.4" height="2.4" fill="#A6A4A2"/><path d="M501.5 73.5h10" stroke="#A6A4A2"/><rect x="496.8" y="78.3" width="2.4" height="2.4" fill="#A6A4A2"/><path d="M501.5 79.5h10" stroke="#A6A4A2"/><rect x="496.8" y="84.3" width="2.4" height="2.4" fill="#A6A4A2"/><path d="M501.5 85.5h10" stroke="#A6A4A2"/>
<path d="M519.5 78.0l3 3l3-3" fill="none" stroke="#A6A4A2" stroke-width="1.1"/>
<path d="M541 73.5h10" stroke="#A6A4A2"/><path d="M541 79.5h10" stroke="#A6A4A2"/><path d="M541 85.5h10" stroke="#A6A4A2"/>
<path d="M558.6 78.0l3 3l3-3" fill="none" stroke="#A6A4A2" stroke-width="1.1"/>
<path d="M574.5 70V90.5" stroke="#C8C6C4" stroke-width="1"/>
<g fill="none" stroke="#A6A4A2"><path d="M584.5 73v13.5M582 75.5l2.5-2.5 2.5 2.5M582 84l2.5 2.5 2.5-2.5"/><path d="M589.5 73.5h8.5M589.5 77.5h8.5M589.5 81.5h8.5M589.5 85.5h8.5"/></g>
<path d="M602.6 78.0l3 3l3-3" fill="none" stroke="#A6A4A2" stroke-width="1.1"/>
<g fill="none" stroke="#A6A4A2"><path d="M647 72v15.5M644.2 84.8l2.8 2.8 2.8-2.8M655 82v5.5M652.6 85.2l2.4 2.4 2.4-2.4"/></g>
<path d="M663.5 78.0l3 3l3-3" fill="none" stroke="#A6A4A2" stroke-width="1.1"/>
<path d="M497 97.5h15" stroke="#A6A4A2" stroke-width="1"/><path d="M504 101.7h8" stroke="#A6A4A2" stroke-width="1"/><path d="M504 105.9h8" stroke="#A6A4A2" stroke-width="1"/><path d="M497 110.1h15" stroke="#A6A4A2" stroke-width="1"/><path d="M503 103.8h-6M499.2 101.6l-2.2 2.2 2.2 2.2" fill="none" stroke="#A6A4A2"/>
<path d="M522 97.5h14.5" stroke="#A6A4A2" stroke-width="1"/><path d="M529 101.7h7.5" stroke="#A6A4A2" stroke-width="1"/><path d="M529 105.9h7.5" stroke="#A6A4A2" stroke-width="1"/><path d="M522 110.1h14.5" stroke="#A6A4A2" stroke-width="1"/><path d="M522 103.8h5.5M525.4 101.6l2.2 2.2-2.2 2.2" fill="none" stroke="#A6A4A2"/>
<path d="M544.5 94V114.5" stroke="#C8C6C4" stroke-width="1"/>
<path d="M599.5 94V114.5" stroke="#C8C6C4" stroke-width="1"/>
<path d="M608.5 99.5h5.5" stroke="#A6A4A2" stroke-width="1"/><path d="M608.5 103.3h5.5" stroke="#A6A4A2" stroke-width="1"/><path d="M608.5 107.1h5.5" stroke="#A6A4A2" stroke-width="1"/><path d="M615.5 99.5h5.5" stroke="#A6A4A2" stroke-width="1"/><path d="M615.5 103.3h5.5" stroke="#A6A4A2" stroke-width="1"/><path d="M615.5 107.1h5.5" stroke="#A6A4A2" stroke-width="1"/>
<path d="M627.4 102.0l3 3l3-3" fill="none" stroke="#A6A4A2" stroke-width="1.1"/>
<g fill="none" stroke="#A6A4A2"><path d="M647.5 98.5h-4v9.5h4M654.5 98.5h4.5v9.5h-4.5"/><path d="M651 96v6M648.8 98l2.2-2.2 2.2 2.2M651 110.5v-6M648.8 108.5l2.2 2.2 2.2-2.2M647 103.2h8"/></g>
<path d="M663.5 102.0l3 3l3-3" fill="none" stroke="#A6A4A2" stroke-width="1.1"/>
<path d="M497 121.5h14.5" stroke="#A6A4A2" stroke-width="1"/><path d="M497 125.5h9.5" stroke="#A6A4A2" stroke-width="1"/><path d="M497 129.5h14.5" stroke="#A6A4A2" stroke-width="1"/><path d="M497 133.5h9.5" stroke="#A6A4A2" stroke-width="1"/>
<path d="M522 121.5h14.5" stroke="#A6A4A2" stroke-width="1"/><path d="M524.5 125.5h9.5" stroke="#A6A4A2" stroke-width="1"/><path d="M522 129.5h14.5" stroke="#A6A4A2" stroke-width="1"/><path d="M524.5 133.5h9.5" stroke="#A6A4A2" stroke-width="1"/>
<path d="M546 121.5h14.5" stroke="#A6A4A2" stroke-width="1"/><path d="M551 125.5h9.5" stroke="#A6A4A2" stroke-width="1"/><path d="M546 129.5h14.5" stroke="#A6A4A2" stroke-width="1"/><path d="M551 133.5h9.5" stroke="#A6A4A2" stroke-width="1"/>
<path d="M570 121.5h14.5" stroke="#A6A4A2" stroke-width="1"/><path d="M570 125.5h14.5" stroke="#A6A4A2" stroke-width="1"/><path d="M570 129.5h14.5" stroke="#A6A4A2" stroke-width="1"/><path d="M570 133.5h14.5" stroke="#A6A4A2" stroke-width="1"/>
<path d="M589.4 126.5l3 3l3-3" fill="none" stroke="#A6A4A2" stroke-width="1.1"/>
<path d="M643.5 121.8h9.5l4 3.6h-9.8l2.6 2.4-2.6 2.6h-3.7l2.6-2.6z" fill="#BDBBB9"/><rect x="649.5" y="126.5" width="9.8" height="7" fill="#F3F2F1" stroke="#A6A4A2"/><path d="M651.5 129h6M651.5 131.2h6" stroke="#A6A4A2" stroke-width=".8"/>
<path d="M663.5 126.5l3 3l3-3" fill="none" stroke="#A6A4A2" stroke-width="1.1"/>
<rect x="699" y="73" width="18.6" height="18.6" fill="#83BEEC" stroke="#0F6CBD" stroke-width="1.1"/><circle cx="717" cy="90.6" r="9.4" fill="#fff" stroke="#444" stroke-width="1.2"/>
<path d="M709.4 128.0l3 3l3-3" fill="none" stroke="#444444" stroke-width="1.1"/>
<rect x="747.5" y="77.5" width="19" height="19" fill="#F9DB9A" stroke="#E07B13" stroke-width="1.1"/><rect x="743.5" y="73.5" width="11" height="10.8" fill="#fff" stroke="#444" stroke-width="1.1"/><rect x="759.4" y="89.4" width="11.2" height="11.2" fill="#fff" stroke="#444" stroke-width="1.1"/>
<path d="M753.6 128.0l3 3l3-3" fill="none" stroke="#444444" stroke-width="1.1"/>
<rect x="790.5" y="73.5" width="27" height="26.5" rx="1.5" fill="#ECEBEA" stroke="#C4C2C0" stroke-width="1.1"/><path d="M818.8 83.5c-3 4.5-8 10.5-12 13.8l-2.8-2.2c4-4 10-9 14.800-11.600zM804 95c-1.600 1-2.400 3.800-5.800 4.500 3 1.500 7 .6 8.400-2.300z" fill="#C8C6C4" stroke="#B3B0AD" stroke-width=".8"/>
<path d="M817 128.0l3 3l3-3" fill="none" stroke="#A6A4A2" stroke-width="1.1"/>
<g fill="none" stroke="#A6A4A2" stroke-linejoin="round"><path d="M836.5 72l5.500 5.500-5 5-5.500-5.500 3.800-3.800M842.500 78c1.500 1.500 2.300 3 1.500 4.500"/></g><rect x="830.3" y="83.500" width="15.700" height="3.300" fill="#B3B0AD"/>
<path d="M852.6 77.5l3 3l3-3" fill="none" stroke="#A6A4A2" stroke-width="1.1"/>
<g fill="none" stroke="#A6A4A2" stroke-linejoin="round"><path d="M839 96h-7.500v8h9v-2.500"/><path d="M835.800 103.500l1-3 7-7 2 2-7 7z"/></g><rect x="830.3" y="106.600" width="15.700" height="3.300" fill="#B3B0AD"/>
<path d="M852.6 100.5l3 3l3-3" fill="none" stroke="#A6A4A2" stroke-width="1.1"/>
<path d="M834 119.500h11.500l-3 8h-11.500z" fill="#D8D6D4" stroke="#A6A4A2" stroke-linejoin="round"/><path d="M831 127.500v3h11.500l3-8v-3" fill="#BDBBB9" stroke="#A6A4A2" stroke-linejoin="round"/>
<path d="M850.6 123.5l3 3l3-3" fill="none" stroke="#A6A4A2" stroke-width="1.1"/>
<g fill="none" stroke="#444" stroke-width="1.3"><circle cx="902.3" cy="81" r="5.2"/><path d="M898.600 84.800l-5.800 6"/></g>
<path d="M896.5 126.3l3 3l3-3" fill="none" stroke="#444444" stroke-width="1.1"/>
<g fill="none" stroke="#444" stroke-width="1.1"><rect x="942.500" y="76.500" width="27" height="21"/><rect x="944.800" y="78.800" width="22.400" height="16.400"/><path d="M950 83.500h17M961.500 83.500v11.700"/></g><path d="M945.800 71.200h7l-3.200 6.200h4.200l-9.600 12.400 2.600-8.800h-4.200z" fill="#F9C66B" stroke="#E8912D" stroke-width="1" stroke-linejoin="round"/>
<path d="M150 174l3.500-4 3.500 4zM150 659.500l3.500 4 3.500-4z" fill="#555"/>
<polygon points="16.00,196.20 17.18,199.38 20.57,199.52 17.90,201.62 18.82,204.88 16.00,203.00 13.18,204.88 14.10,201.62 11.43,199.52 14.82,199.38" fill="#555"/><path d="M10.5 200h2" stroke="#777" stroke-width=".8"/>
<polygon points="16.00,267.20 17.18,270.38 20.57,270.52 17.90,272.62 18.82,275.88 16.00,274.00 13.18,275.88 14.10,272.62 11.43,270.52 14.82,270.38" fill="#555"/><path d="M10.5 271h2" stroke="#777" stroke-width=".8"/>
<polygon points="16.00,338.20 17.18,341.38 20.57,341.52 17.90,343.62 18.82,346.88 16.00,345.00 13.18,346.88 14.10,343.62 11.43,341.52 14.82,341.38" fill="#555"/><path d="M10.5 342h2" stroke="#777" stroke-width=".8"/>
<polygon points="16.00,409.20 17.18,412.38 20.57,412.52 17.90,414.62 18.82,417.88 16.00,416.00 13.18,417.88 14.10,414.62 11.43,412.52 14.82,412.38" fill="#555"/><path d="M10.5 413h2" stroke="#777" stroke-width=".8"/>
<polygon points="16.00,480.20 17.18,483.38 20.57,483.52 17.90,485.62 18.82,488.88 16.00,487.00 13.18,488.88 14.10,485.62 11.43,483.52 14.82,483.38" fill="#555"/><path d="M10.5 484h2" stroke="#777" stroke-width=".8"/>
<polygon points="16.00,551.20 17.18,554.38 20.57,554.52 17.90,556.62 18.82,559.88 16.00,558.00 13.18,559.88 14.10,556.62 11.43,554.52 14.82,554.38" fill="#555"/><path d="M10.5 555h2" stroke="#777" stroke-width=".8"/>
<polygon points="16.00,622.20 17.18,625.38 20.57,625.52 17.90,627.62 18.82,630.88 16.00,629.00 13.18,630.88 14.10,627.62 11.43,625.52 14.82,625.38" fill="#555"/><path d="M10.5 626h2" stroke="#777" stroke-width=".8"/>
<path d="M1025 173l3.500-4 3.500 4zM1025 602.500l3.500 4 3.500-4z" fill="#555"/>
<path d="M1025 623l3.500-3.500 3.500 3.500zM1025 627l3.500-3.500 3.500 3.500zM1025 634l3.500 3.500 3.500-3.500zM1025 638l3.500 3.500 3.500-3.500z" fill="#444"/>
<path d="M179.500 652.500l-4 3.500 4 3.500zM1008.500 652.500l4 3.500-4 3.500z" fill="#555"/>
<g fill="none" stroke="#444" stroke-width="1"><path d="M236.500 675.500a5.200 5.200 0 1 0 3.500 9" stroke-dasharray="2.200 1.300"/><path d="M237.200 674v4.500M235 676.200h4.400M238 684l-2.400 3"/><path d="M239.800 683.500l4.600 4.600M244.400 683.500l-4.600 4.600" stroke-width="1.200"/></g>
<path d="M601 680.500h15M601 684h15M601 687.500h15M605 678l3.500-3 3.500 3" fill="none" stroke="#444" stroke-width="1"/>
<g fill="none" stroke="#444" stroke-width="1.100"><rect x="681.500" y="675.500" width="13" height="11"/><rect x="684" y="678" width="8" height="5.500"/><path d="M684 685h8" stroke-width=".8"/></g>
<g fill="none" stroke="#444" stroke-width="1.100"><rect x="721.500" y="675.500" width="5" height="4.500"/><rect x="729.500" y="675.500" width="5" height="4.500"/><rect x="721.500" y="682.500" width="5" height="4.500"/><rect x="729.500" y="682.500" width="5" height="4.500"/></g>
<g fill="none" stroke="#444" stroke-width="1.100"><path d="M767 676.500c-2-1.200-4-1.200-5.500-.5v10.500c1.500-.7 3.500-.7 5.500.5 2-1.200 4-1.200 5.500-.5v-10.500c-1.500-.7-3.500-.7-5.500.5zM767 676.500v10.500"/><path d="M763 679.500h2.500M763 682h2.500M768.500 679.500h2.500M768.500 682h2.500" stroke-width=".7"/></g>
<g fill="none" stroke="#444" stroke-width="1.100"><path d="M801 675.500h12M802.500 675.500v7h9v-7M807 682.500v4.500M804 687.500h6"/></g>
<path d="M835 682.500h6.500M951.500 682.500h8M955.500 678.500v8" stroke="#444" stroke-width="1.100"/><path d="M846 682.500h94" stroke="#A0A0A0" stroke-width="1"/><path d="M890.500 680v5" stroke="#A0A0A0"/><rect x="865" y="676.500" width="4" height="12" fill="#555"/>
<g fill="none" stroke="#444" stroke-width="1.100"><rect x="1009.500" y="678.500" width="7" height="8" rx="1"/><path d="M1010.500 676l2.500-2.200 2.500 2.200M1010.500 689l2.500 2.200 2.500-2.200M1007 680l-2.200 2.500 2.200 2.500M1019 680l2.200 2.500-2.200 2.500"/></g>
</svg>
<div style="position:absolute;left:0;top:0;width:1038px;height:694px;will-change:transform">
<span class="t" style="left:21.22px;top:11.02px;font-size:13px;line-height:14.521px;color:#fff;letter-spacing:-0.645px;">AutoSave</span>
<span class="t" style="left:96.94px;top:11.04px;font-size:11px;line-height:12.287px;color:#fff;letter-spacing:0.125px;">Off</span>
<span class="t" style="left:420.22px;top:12.02px;font-size:13px;line-height:14.521px;color:#fff;letter-spacing:-0.818px;">modern_summer_2010_24932.pptx</span>
<span class="t" style="left:749.19px;top:10.03px;font-size:13.5px;line-height:15.079px;color:#B7472A;letter-spacing:-0.610px;">Sign in</span>
<span class="t" style="left:17.52px;top:44.03px;font-size:13px;line-height:14.521px;color:#444444;letter-spacing:-0.396px;">File</span>
<span class="t" style="left:133.22px;top:44.03px;font-size:13px;line-height:14.521px;color:#444444;letter-spacing:0.109px;">Insert</span>
<span class="t" style="left:194.22px;top:44.03px;font-size:13px;line-height:14.521px;color:#444444;letter-spacing:0.119px;">Design</span>
<span class="t" style="left:263.72px;top:44.03px;font-size:13px;line-height:14.521px;color:#444444;letter-spacing:-0.054px;">Transitions</span>
<span class="t" style="left:356.22px;top:44.03px;font-size:13px;line-height:14.521px;color:#444444;letter-spacing:0.083px;">Animations</span>
<span class="t" style="left:450.72px;top:44.03px;font-size:13px;line-height:14.521px;color:#444444;letter-spacing:0.002px;">Slide Show</span>
<span class="t" style="left:543.22px;top:44.03px;font-size:13px;line-height:14.521px;color:#444444;letter-spacing:-0.213px;">Review</span>
<span class="t" style="left:611.22px;top:44.03px;font-size:13px;line-height:14.521px;color:#444444;letter-spacing:0.206px;">View</span>
<span class="t" style="left:666.22px;top:44.03px;font-size:13px;line-height:14.521px;color:#444444;letter-spacing:0.163px;">Recording</span>
<span class="t" style="left:755.22px;top:44.03px;font-size:13px;line-height:14.521px;color:#444444;letter-spacing:0.414px;">Add-ins</span>
<span class="t" style="left:828.22px;top:44.03px;font-size:13px;line-height:14.521px;color:#444444;letter-spacing:0.441px;">Help</span>
<span class="t" style="left:68.72px;top:44.03px;font-size:13px;line-height:14.521px;color:#333;letter-spacing:1.128px;text-shadow:0.4px 0 0 #333;">Home</span>
<span class="t" style="left:940.22px;top:44.03px;font-size:13px;line-height:14.521px;color:#B93E1E;font-weight:bold;letter-spacing:-0.143px;">Share</span>
<span class="t" style="left:14.68px;top:147.02px;font-size:12px;line-height:13.404px;color:#444444;letter-spacing:0.022px;">Clipboard</span>
<span class="t" style="left:128.28px;top:147.02px;font-size:12px;line-height:13.404px;color:#444444;letter-spacing:-0.249px;">Slides</span>
<span class="t" style="left:317.98px;top:147.02px;font-size:12px;line-height:13.404px;color:#444444;letter-spacing:0.176px;">Font</span>
<span class="t" style="left:549.98px;top:147.02px;font-size:12px;line-height:13.404px;color:#444444;letter-spacing:-0.325px;">Paragraph</span>
<span class="t" style="left:747.68px;top:147.02px;font-size:12px;line-height:13.404px;color:#444444;letter-spacing:0.137px;">Drawing</span>
<span class="t" style="left:932.98px;top:147.02px;font-size:12px;line-height:13.404px;color:#444444;letter-spacing:-0.212px;">Designer</span>
<span class="t" style="left:15.65px;top:108.02px;font-size:12.5px;line-height:13.963px;color:#444444;letter-spacing:-0.641px;">Paste</span>
<span class="t" style="left:113.85px;top:112.02px;font-size:12.5px;line-height:13.963px;color:#444444;letter-spacing:-0.153px;">New</span>
<span class="t" style="left:107.55px;top:128.02px;font-size:12.5px;line-height:13.963px;color:#444444;letter-spacing:-0.399px;">Slide</span>
<span class="t" style="left:205.62px;top:113.02px;font-size:13px;line-height:14.521px;color:#A6A4A2;font-weight:bold;letter-spacing:-0.228px;">B</span>
<span class="t" style="left:230.02px;top:113.02px;font-size:13px;line-height:14.521px;color:#A6A4A2;font-style:italic;letter-spacing:4.348px;font-family:"Liberation Serif",serif;">I</span>
<span class="t" style="left:252.42px;top:113.02px;font-size:13px;line-height:14.521px;color:#A6A4A2;letter-spacing:0.672px;text-decoration:underline;">U</span>
<span class="t" style="left:276.86px;top:112.03px;font-size:14px;line-height:15.638px;color:#A6A4A2;letter-spacing:0.042px;text-shadow:1px 1px 1px #ccc;">S</span>
<span class="t" style="left:298.78px;top:114.02px;font-size:12px;line-height:13.404px;color:#A6A4A2;letter-spacing:1.092px;text-decoration:line-through;">ab</span>
<span class="t" style="left:321.25px;top:111.02px;font-size:12.5px;line-height:13.963px;color:#A6A4A2;letter-spacing:2.153px;">AV</span>
<span class="t" style="left:359.19px;top:112.03px;font-size:13.5px;line-height:15.079px;color:#A6A4A2;letter-spacing:1.407px;">Aa</span>
<span class="t" style="left:403.98px;top:78.03px;font-size:17px;line-height:18.989px;color:#A6A4A2;letter-spacing:1.701px;">A</span>
<span class="t" style="left:429.73px;top:80.03px;font-size:14.5px;line-height:16.197px;color:#A6A4A2;letter-spacing:1.468px;">A</span>
<span class="t" style="left:458.54px;top:78.03px;font-size:16px;line-height:17.872px;color:#A6A4A2;letter-spacing:1.748px;">A</span>
<span class="t" style="left:446.66px;top:110.03px;font-size:14px;line-height:15.638px;color:#A6A4A2;letter-spacing:1.342px;">A</span>
<span class="t" style="left:535.47px;top:71.03px;font-size:5.5px;line-height:6.143px;color:#A6A4A2;letter-spacing:0.201px;">1</span>
<span class="t" style="left:535.47px;top:77.03px;font-size:5.5px;line-height:6.143px;color:#A6A4A2;letter-spacing:0.201px;">2</span>
<span class="t" style="left:535.47px;top:83.03px;font-size:5.5px;line-height:6.143px;color:#A6A4A2;letter-spacing:0.201px;">3</span>
<span class="t" style="left:650.70px;top:71.02px;font-size:10px;line-height:11.170px;color:#A6A4A2;letter-spacing:1.530px;">A</span>
<span class="t" style="left:552.91px;top:98.02px;font-size:11.5px;line-height:12.845px;color:#A6A4A2;letter-spacing:0.587px;">&gt;¶</span>
<span class="t" style="left:577.01px;top:98.02px;font-size:11.5px;line-height:12.845px;color:#A6A4A2;letter-spacing:0.987px;">¶&lt;</span>
<span class="t" style="left:693.15px;top:108.02px;font-size:12.5px;line-height:13.963px;color:#444444;letter-spacing:-0.859px;">Shapes</span>
<span class="t" style="left:735.55px;top:108.02px;font-size:12.5px;line-height:13.963px;color:#444444;letter-spacing:-0.162px;">Arrange</span>
<span class="t" style="left:787.55px;top:108.02px;font-size:12.5px;line-height:13.963px;color:#A6A4A2;letter-spacing:-0.013px;">Quick</span>
<span class="t" style="left:782.75px;top:124.02px;font-size:12.5px;line-height:13.963px;color:#A6A4A2;letter-spacing:-0.608px;">Styles</span>
<span class="t" style="left:880.65px;top:106.02px;font-size:12.5px;line-height:13.963px;color:#444444;letter-spacing:-0.053px;">Editing</span>
<span class="t" style="left:937.75px;top:108.02px;font-size:12.5px;line-height:13.963px;color:#444444;letter-spacing:-0.482px;">Design</span>
<span class="t" style="left:941.55px;top:124.02px;font-size:12.5px;line-height:13.963px;color:#444444;letter-spacing:-0.620px;">Ideas</span>
<span class="t" style="left:12.33px;top:177.03px;font-size:14.5px;line-height:16.197px;color:#4A4A4A;letter-spacing:0.276px;">1</span>
<span class="t" style="left:12.33px;top:248.03px;font-size:14.5px;line-height:16.197px;color:#D24726;letter-spacing:0.276px;">2</span>
<span class="t" style="left:12.33px;top:319.03px;font-size:14.5px;line-height:16.197px;color:#4A4A4A;letter-spacing:0.276px;">3</span>
<span class="t" style="left:12.33px;top:390.03px;font-size:14.5px;line-height:16.197px;color:#4A4A4A;letter-spacing:0.276px;">4</span>
<span class="t" style="left:12.33px;top:461.03px;font-size:14.5px;line-height:16.197px;color:#4A4A4A;letter-spacing:0.276px;">5</span>
<span class="t" style="left:12.33px;top:532.03px;font-size:14.5px;line-height:16.197px;color:#4A4A4A;letter-spacing:0.276px;">6</span>
<span class="t" style="left:12.33px;top:603.03px;font-size:14.5px;line-height:16.197px;color:#4A4A4A;letter-spacing:0.276px;">7</span>
<span class="t" style="left:8.51px;top:676.02px;font-size:11.5px;line-height:12.845px;color:#444444;letter-spacing:0.013px;">Slide 2 of 8</span>
<span class="t" style="left:97.31px;top:676.02px;font-size:11.5px;line-height:12.845px;color:#444444;letter-spacing:-0.033px;">English (United States)</span>
<span class="t" style="left:248.71px;top:676.02px;font-size:11.5px;line-height:12.845px;color:#444444;letter-spacing:-0.058px;">Accessibility: Investigate</span>
<span class="t" style="left:618.81px;top:676.02px;font-size:11.5px;line-height:12.845px;color:#444444;letter-spacing:0.085px;">Notes</span>
<span class="t" style="left:971.61px;top:676.02px;font-size:11.5px;line-height:12.845px;color:#444444;letter-spacing:-0.218px;">43%</span>
<span class="t" style="left:428.66px;top:261.03px;font-size:39px;line-height:43.563px;color:#fff;transform:scaleX(1.0683);transform-origin:0 0;-webkit-text-stroke:0.9px #230957;">Your</span>
<span class="t" style="left:521.66px;top:261.03px;font-size:39px;line-height:43.563px;color:#3EC7A9;transform:scaleX(1.1130);transform-origin:0 0;-webkit-text-stroke:0.9px #230957;">Modern</span>
<span class="t" style="left:677.16px;top:261.03px;font-size:39px;line-height:43.563px;color:#fff;transform:scaleX(1.1447);transform-origin:0 0;-webkit-text-stroke:0.9px #230957;">Title</span>
<span class="t" style="left:431.60px;top:333.02px;font-size:16.6px;line-height:18.542px;color:#7EDCC6;font-weight:bold;transform:scaleX(1.0541);transform-origin:0 0;">Simple Dummy Text of the printing and</span>
<span class="t" style="left:396.80px;top:357.02px;font-size:16.6px;line-height:18.542px;color:#7EDCC6;font-weight:bold;transform:scaleX(1.0458);transform-origin:0 0;">typesetting industry. Lorem ipsum has been the</span>
<span class="t" style="left:459.80px;top:381.02px;font-size:16.6px;line-height:18.542px;color:#7EDCC6;font-weight:bold;transform:scaleX(1.0484);transform-origin:0 0;">industry’s standard dummy text.</span>
<span class="t" style="left:407.20px;top:429.02px;font-size:16.6px;line-height:18.542px;color:#7EDCC6;font-weight:bold;transform:scaleX(1.0462);transform-origin:0 0;">Again here is some simple dummy text of the</span>
<span class="t" style="left:399.70px;top:453.02px;font-size:16.6px;line-height:18.542px;color:#7EDCC6;font-weight:bold;transform:scaleX(1.0461);transform-origin:0 0;">printing and typesetting industry. Lorem ipsum</span>
<span class="t" style="left:407.20px;top:477.02px;font-size:16.6px;line-height:18.542px;color:#7EDCC6;font-weight:bold;transform:scaleX(1.0490);transform-origin:0 0;">has been the industry’s standard dummy text</span>
<span class="t" style="left:506.60px;top:501.02px;font-size:16.6px;line-height:18.542px;color:#7EDCC6;font-weight:bold;transform:scaleX(1.0438);transform-origin:0 0;">ever since the 1500s.</span>
<span class="t" style="left:59.73px;top:199.03px;font-size:4.4px;line-height:4.915px;color:#fff;letter-spacing:0.545px;">MODERN</span>
<span class="t" style="left:65.70px;top:202.03px;font-size:6.4px;line-height:7.149px;color:#7EDCC6;font-weight:bold;letter-spacing:1.251px;">SUMMER</span>
<span class="t" style="left:63.21px;top:263.02px;font-size:4.3px;line-height:4.803px;color:#fff;letter-spacing:0.176px;">Your</span>
<span class="t" style="left:73.22px;top:263.02px;font-size:4.3px;line-height:4.803px;color:#3EC7A9;letter-spacing:0.145px;">Modern</span>
<span class="t" style="left:89.31px;top:263.02px;font-size:4.3px;line-height:4.803px;color:#fff;letter-spacing:0.204px;">Title</span>
<span class="t" style="left:72.78px;top:399.02px;font-size:4.3px;line-height:4.803px;color:#fff;letter-spacing:-0.114px;">Your</span>
<span class="t" style="left:81.48px;top:399.02px;font-size:4.3px;line-height:4.803px;color:#3EC7A9;letter-spacing:-0.029px;">Modern</span>
<span class="t" style="left:96.27px;top:399.02px;font-size:4.3px;line-height:4.803px;color:#fff;letter-spacing:0.313px;">Title</span>
<span class="t" style="left:72.78px;top:470.02px;font-size:4.3px;line-height:4.803px;color:#fff;letter-spacing:-0.114px;">Your</span>
<span class="t" style="left:81.48px;top:470.02px;font-size:4.3px;line-height:4.803px;color:#3EC7A9;letter-spacing:-0.029px;">Modern</span>
<span class="t" style="left:96.27px;top:470.02px;font-size:4.3px;line-height:4.803px;color:#fff;letter-spacing:0.313px;">Title</span>
<span class="t" style="left:41.90px;top:557.02px;font-size:4.3px;line-height:4.803px;color:#fff;letter-spacing:-0.114px;">Your</span>
<span class="t" style="left:50.60px;top:557.02px;font-size:4.3px;line-height:4.803px;color:#3EC7A9;letter-spacing:-0.290px;">Modern</span>
<span class="t" style="left:64.08px;top:557.02px;font-size:4.3px;line-height:4.803px;color:#fff;letter-spacing:0.096px;">Title</span>
<span class="t" style="left:62.34px;top:612.02px;font-size:4.3px;line-height:4.803px;color:#fff;letter-spacing:0.176px;">Your</span>
<span class="t" style="left:71.91px;top:612.02px;font-size:4.3px;line-height:4.803px;color:#3EC7A9;letter-spacing:-0.029px;">Modern</span>
<span class="t" style="left:86.70px;top:612.02px;font-size:4.3px;line-height:4.803px;color:#fff;letter-spacing:0.531px;">Title</span>
<span class="t" style="left:69.34px;top:339.03px;font-size:3.6px;line-height:4.021px;color:#2F8FD8;font-weight:bold;letter-spacing:0.157px;">YOUR</span>
<span class="t" style="left:80.65px;top:339.03px;font-size:3.6px;line-height:4.021px;color:#3EC7A9;font-weight:bold;letter-spacing:-0.265px;">QUOTE</span>
</div>
</body></html>
